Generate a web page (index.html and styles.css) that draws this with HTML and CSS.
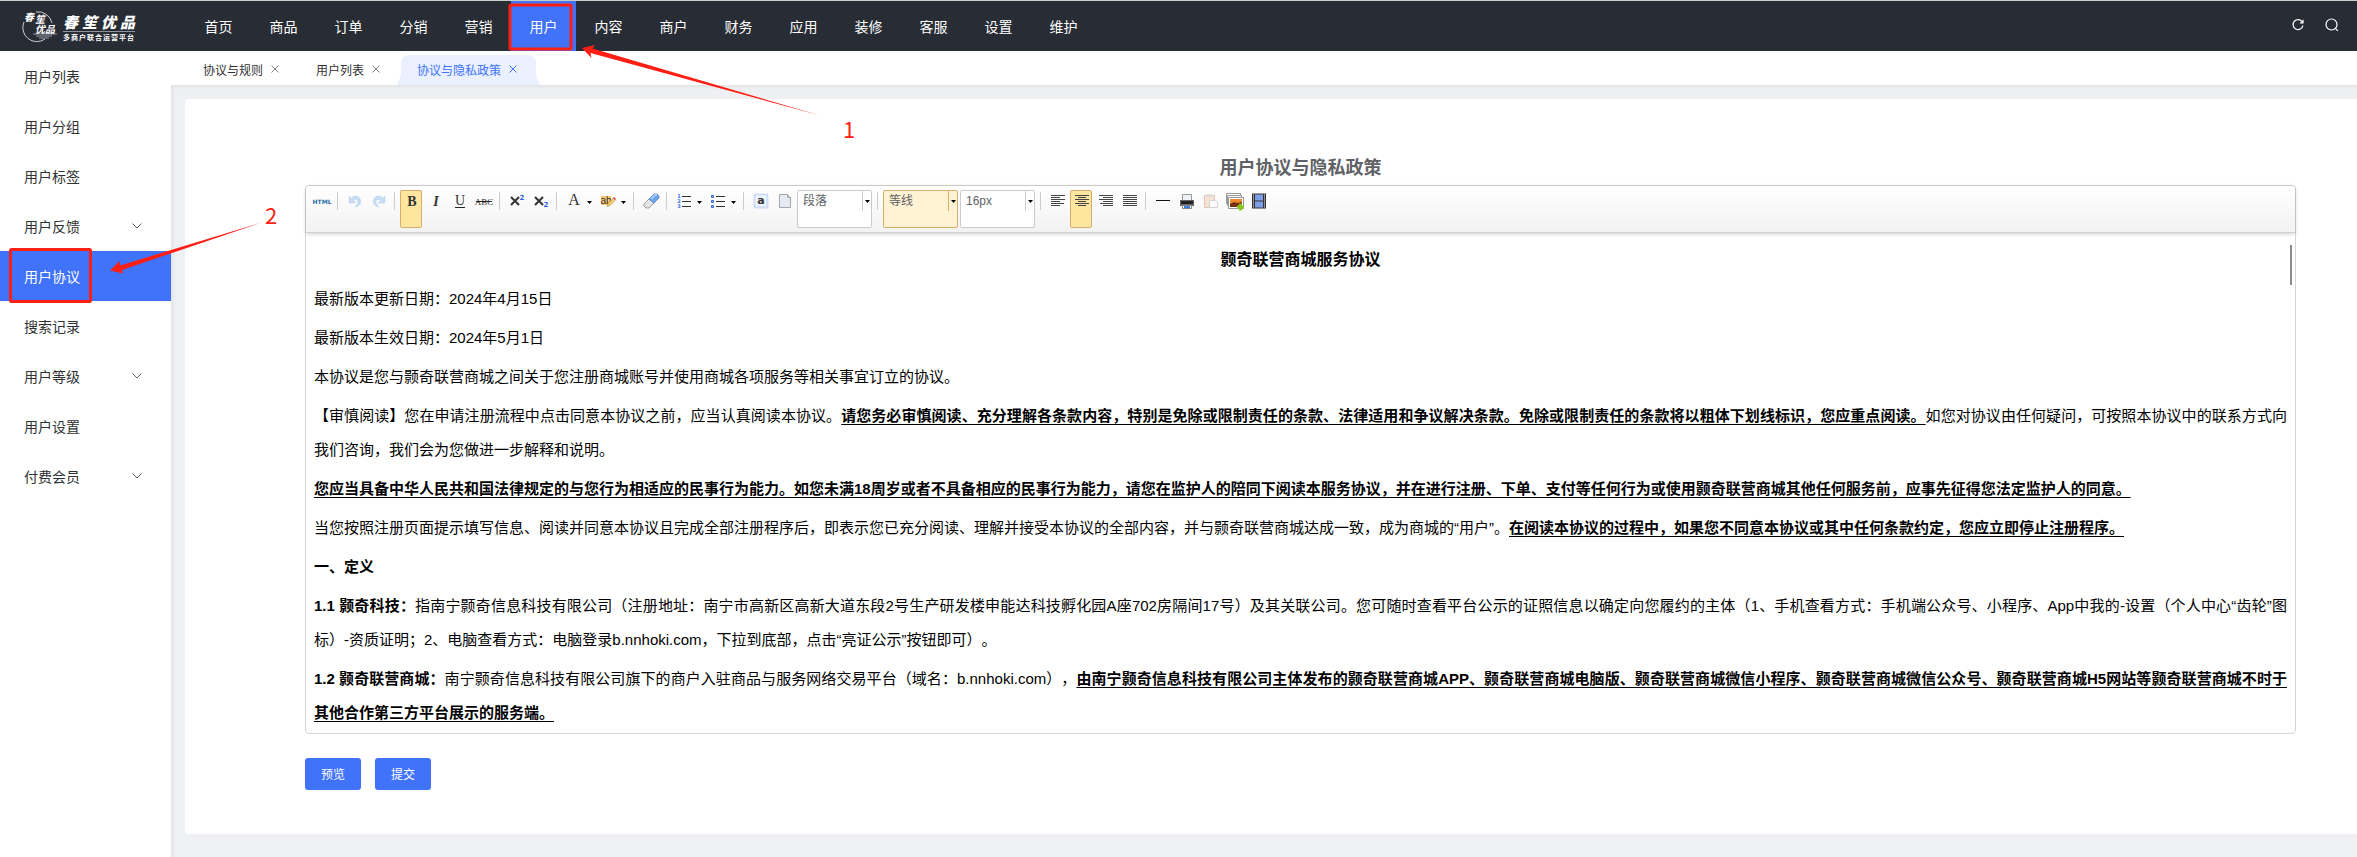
FILE: index.html
```html
<!DOCTYPE html>
<html lang="zh-CN">
<head>
    <meta charset="UTF-8">
    <meta name="viewport" content="width=device-width, initial-scale=1.0">
    <title>协议与隐私政策</title>
    <link rel="stylesheet" href="styles.css">
</head>
<body>

    <header class="header">
        <a href="#" class="logo" aria-label="春笙优品">
            <svg width="128" height="34" viewBox="0 0 128 34">
                <g fill="none" stroke="#c9ccd2">
                    <path d="M14 3a14 14 0 0 1 16 11M2 13a14 14 0 0 0 21 17" />
                    <path d="M11 25h24M14 27h16M17 29h10" stroke-width="1" opacity=".7" />
                </g>
                <g class="logo-script">
                    <text x="2 13" y="12 14">春笙</text>
                    <text x="13 23" y="24">优品</text>
                </g>
                <text class="logo-name" x="41 60 79 98" y="19">春笙优品</text>
                <path d="M41 22.500h72" stroke="#8f949c" />
                <text class="logo-sub" x="41 49 57 65 73 81 89 97 105" y="31">多商户联合运营平台</text>
            </svg>
        </a>
        <nav class="nav">
            <a href="#">首页</a>
            <a href="#">商品</a>
            <a href="#">订单</a>
            <a href="#">分销</a>
            <a href="#">营销</a>
            <a href="#" class="active">用户</a>
            <a href="#">内容</a>
            <a href="#">商户</a>
            <a href="#">财务</a>
            <a href="#">应用</a>
            <a href="#">装修</a>
            <a href="#">客服</a>
            <a href="#">设置</a>
            <a href="#">维护</a>
        </nav>
        <div class="header-tools">
            <button type="button" aria-label="刷新">
                <svg width="14" height="14" viewBox="0 0 14 14" fill="none" stroke="#fff" stroke-width="1.200"><path d="M11.500 4.200A5 5 0 1 0 12 7.500M12 1.800v3H9" /></svg>
            </button>
            <button type="button" aria-label="搜索">
                <svg width="14" height="14" viewBox="0 0 14 14" fill="none" stroke="#fff" stroke-width="1.200"><circle cx="6.500" cy="6.500" r="5.500" /><path d="M10.400 10.400l2.400 2.400" /></svg>
            </button>
        </div>
    </header>

    <div class="layout">
        <aside class="sidebar">
            <a href="#">用户列表</a>
            <a href="#">用户分组</a>
            <a href="#">用户标签</a>
            <a href="#">用户反馈 <svg class="chevron" width="10" height="6" viewBox="0 0 10 6"><path d="M.500.500L5 5 9.500.500" /></svg></a>
            <a href="#" class="active">用户协议</a>
            <a href="#">搜索记录</a>
            <a href="#">用户等级 <svg class="chevron" width="10" height="6" viewBox="0 0 10 6"><path d="M.500.500L5 5 9.500.500" /></svg></a>
            <a href="#">用户设置</a>
            <a href="#">付费会员 <svg class="chevron" width="10" height="6" viewBox="0 0 10 6"><path d="M.500.500L5 5 9.500.500" /></svg></a>
        </aside>

        <main class="main">
            <div class="tabs">
                <div class="tab">
                    <a href="#">协议与规则</a>
                    <button type="button" aria-label="关闭"><svg width="8" height="8" viewBox="0 0 8 8"><path d="M.500.500l7 7M7.500.500l-7 7" /></svg></button>
                </div>
                <div class="tab">
                    <a href="#">用户列表</a>
                    <button type="button" aria-label="关闭"><svg width="8" height="8" viewBox="0 0 8 8"><path d="M.500.500l7 7M7.500.500l-7 7" /></svg></button>
                </div>
                <div class="tab active">
                    <a href="#">协议与隐私政策</a>
                    <button type="button" aria-label="关闭"><svg width="8" height="8" viewBox="0 0 8 8"><path d="M.500.500l7 7M7.500.500l-7 7" /></svg></button>
                </div>
            </div>

            <div class="content">
                <section class="card">
                    <h1>用户协议与隐私政策</h1>

                    <div class="editor">
                        <div class="toolbar">
                            <button type="button" aria-label="源代码"><svg width="18" height="16" viewBox="0 0 18 16"><text x="9" y="11" class="ic-html">HTML</text></svg></button>
                            <span class="sep"></span>
                            <button type="button" aria-label="撤销"><svg width="16" height="16" viewBox="0 0 16 16"><path d="M2 3v7h7L6.500 7.500C9 5 12 7 10.500 11L8 14c6-1 7-6 4.500-9S6 3 4.300 5.200z" fill="#c5dcf2" stroke="#b4d0ec" stroke-width=".500" /></svg></button>
                            <button type="button" aria-label="重做"><svg width="16" height="16" viewBox="0 0 16 16"><path d="M14 3v7H7l2.500-2.500C7 5 4 7 5.500 11L8 14C2 13 1 8 3.500 5s6.500-2 8.200.200z" fill="#c5dcf2" stroke="#b4d0ec" stroke-width=".500" /></svg></button>
                            <span class="sep"></span>
                            <button type="button" class="on" aria-label="加粗"><svg width="16" height="16" viewBox="0 0 16 16"><text x="8" y="13" class="ic-serif bold">B</text></svg></button>
                            <button type="button" aria-label="斜体"><svg width="16" height="16" viewBox="0 0 16 16"><text x="8" y="13" class="ic-serif italic">I</text></svg></button>
                            <button type="button" aria-label="下划线"><svg width="16" height="16" viewBox="0 0 16 16"><text x="8" y="12" class="ic-serif">U</text><path d="M3 14.500h10" stroke="#222" /></svg></button>
                            <button type="button" aria-label="删除线"><svg width="18" height="16" viewBox="0 0 18 16"><text x="9" y="12" class="ic-abc">ABC</text><path d="M1 8.500h16" stroke="#222" /></svg></button>
                            <span class="sep"></span>
                            <button type="button" aria-label="上标"><svg width="16" height="16" viewBox="0 0 16 16"><path d="M2 4l8 8M10 4l-8 8" stroke="#333" stroke-width="2" /><text x="13" y="7" class="ic-num">2</text></svg></button>
                            <button type="button" aria-label="下标"><svg width="16" height="16" viewBox="0 0 16 16"><path d="M2 4l8 8M10 4l-8 8" stroke="#333" stroke-width="2" /><text x="13" y="14" class="ic-num">2</text></svg></button>
                            <span class="sep"></span>
                            <button type="button" class="split" aria-label="字体颜色"><svg width="16" height="16" viewBox="0 0 16 16"><text x="8" y="12" class="ic-serif big">A</text></svg><i class="caret"></i></button>
                            <button type="button" class="split" aria-label="背景色"><svg width="16" height="16" viewBox="0 0 16 16"><path d="M1 3h10v9H1z" fill="#fdc670" /><text x="6" y="11" class="ic-ab">ab</text><path d="M7 13.500l1-3 5-5 2 2-5 5z" fill="#f0d070" stroke="#9a7430" stroke-width=".500" /><path d="M13 5l1-1 2 2-1 1z" fill="#d33" /></svg><i class="caret"></i></button>
                            <span class="sep"></span>
                            <button type="button" aria-label="清除格式"><svg width="16" height="16" viewBox="0 0 16 16"><path d="M1 11l5-5 5 4-5 5H3L1 13z" fill="#e6e6ea" stroke="#777" stroke-width=".700" /><path d="M6 6l5-5h3l2 2v2l-5 5z" fill="#6aa5ee" stroke="#4a7cc0" stroke-width=".700" /><path d="M8 6l4-4h2" fill="none" stroke="#b8d7fb" stroke-width="1.500" /></svg></button>
                            <span class="sep"></span>
                            <button type="button" class="split" aria-label="有序列表"><svg width="16" height="16" viewBox="0 0 16 16"><g class="ic-ol"><text x="3" y="5">1</text><text x="3" y="10">2</text><text x="3" y="15">3</text></g><path d="M6 3.500h9M6 8.500h9M6 13.500h9" stroke="#333" /></svg><i class="caret"></i></button>
                            <button type="button" class="split" aria-label="无序列表"><svg width="16" height="16" viewBox="0 0 16 16"><path d="M1.500 2.500h2v2h-2zM1.500 7.500h2v2h-2zM1.500 12.500h2v2h-2z" fill="#9db8f5" stroke="#3c66d8" /><path d="M6 3.500h9M6 8.500h9M6 13.500h9" stroke="#333" /></svg><i class="caret"></i></button>
                            <span class="sep"></span>
                            <button type="button" aria-label="全选"><svg width="16" height="16" viewBox="0 0 16 16"><rect x="1.500" y="1.500" width="13" height="13" fill="#eef4fd" stroke="#a9c6f4" stroke-width="2" stroke-dasharray="1 1" /><text x="8" y="11" class="ic-a">a</text></svg></button>
                            <button type="button" aria-label="清空文档"><svg width="16" height="16" viewBox="0 0 16 16"><path d="M2.500 1.500h8l3 3v10h-11z" fill="#e6ebf3" stroke="#a5a7aa" /><path d="M10.500 1.500v3h3" fill="#ccc" stroke="#a5a7aa" /></svg></button>
                            <div class="combo">
                                <select aria-label="段落格式"><option>段落</option></select>
                                <i class="caret"></i>
                            </div>
                            <span class="sep"></span>
                            <div class="combo on">
                                <select aria-label="字体"><option>等线</option></select>
                                <i class="caret"></i>
                            </div>
                            <div class="combo">
                                <select aria-label="字号"><option>16px</option></select>
                                <i class="caret"></i>
                            </div>
                            <span class="sep"></span>
                            <button type="button" aria-label="居左对齐"><svg width="16" height="16" viewBox="0 0 16 16" class="ic-lines"><path d="M1 2.500h14M1 4.500h9M1 6.500h14M1 8.500h9M1 10.500h13M1 12.500h9" /></svg></button>
                            <button type="button" class="on" aria-label="居中对齐"><svg width="16" height="16" viewBox="0 0 16 16" class="ic-lines"><path d="M1 2.500h14M4 4.500h8M1 6.500h14M4 8.500h8M1 10.500h14M4 12.500h8" /></svg></button>
                            <button type="button" aria-label="居右对齐"><svg width="16" height="16" viewBox="0 0 16 16" class="ic-lines"><path d="M1 2.500h14M5 4.500h10M1 6.500h14M5 8.500h10M2 10.500h13M5 12.500h10" /></svg></button>
                            <button type="button" aria-label="两端对齐"><svg width="16" height="16" viewBox="0 0 16 16" class="ic-lines"><path d="M1 2.500h14M1 4.500h14M1 6.500h14M1 8.500h14M1 10.500h14M1 12.500h14" /></svg></button>
                            <span class="sep"></span>
                            <button type="button" aria-label="分隔线"><svg width="16" height="16" viewBox="0 0 16 16"><path d="M1 7.500h14" stroke="#111" /></svg></button>
                            <button type="button" aria-label="打印"><svg width="16" height="16" viewBox="0 0 16 16"><path d="M3.500 1.500h9v6h-9z" fill="#eef1f5" stroke="#999" /><path d="M1 7h14v6H1z" fill="#666" /><path d="M2 8h12v3H2z" fill="#222" /><path d="M3.500 12.500h9v3h-9z" fill="#fff" stroke="#888" /><path d="M5 14h6" stroke="#3d7fe0" stroke-width="2" /></svg></button>
                            <button type="button" aria-label="粘贴"><svg width="16" height="16" viewBox="0 0 16 16"><path d="M1.500 2.500h10v12h-10z" fill="#f6e2d4" stroke="#e6c3ac" /><path d="M4 1h5v3H4z" fill="#ddd" /><path d="M6.500 7.500h6l2 2v5h-8z" fill="#fafafa" stroke="#d4d4d4" /></svg></button>
                            <button type="button" aria-label="多图上传"><svg width="20" height="18" viewBox="0 0 20 18"><path d="M1.500.500h14v10h-14z" fill="#fff" stroke="#999" /><path d="M2.500 2.500h14v10h-14z" fill="#fff" stroke="#999" /><path d="M3.500 4.500h15v11h-15z" fill="#fff" stroke="#999" /><path d="M5 6h12v8H5z" fill="#ef8a2c" /><path d="M5 11l4-2 3 1 5-1v5H5z" fill="#76300f" /><path d="M15.500 10.500v7M12 14h7" stroke="#8ac61e" stroke-width="3" /></svg></button>
                            <button type="button" aria-label="视频"><svg width="16" height="16" viewBox="0 0 16 16"><path d="M1 .500h14v15H1z" fill="#333" /><path d="M4 1.500h8v6H4zM4 8.500h8v6H4z" fill="#7f9eea" /><path d="M2.500 1.500v14M13.500 1.500v14" stroke="#eee" stroke-dasharray="1 1" /></svg></button>
                        </div>

                        <div class="document" contenteditable="true" spellcheck="false" role="textbox" aria-label="协议内容">
                            <h2>颢奇联营商城服务协议</h2>
                            <p>最新版本更新日期：2024年4月15日</p>
                            <p>最新版本生效日期：2024年5月1日</p>
                            <p>本协议是您与颢奇联营商城之间关于您注册商城账号并使用商城各项服务等相关事宜订立的协议。</p>
                            <p>【审慎阅读】您在申请注册流程中点击同意本协议之前，应当认真阅读本协议。<u>请您务必审慎阅读、充分理解各条款内容，特别是免除或限制责任的条款、法律适用和争议解决条款。免除或限制责任的条款将以粗体下划线标识，您应重点阅读。</u>如您对协议由任何疑问，可按照本协议中的联系方式向我们咨询，我们会为您做进一步解释和说明。</p>
                            <p><u>您应当具备中华人民共和国法律规定的与您行为相适应的民事行为能力。如您未满18周岁或者不具备相应的民事行为能力，请您在监护人的陪同下阅读本服务协议，并在进行注册、下单、支付等任何行为或使用颢奇联营商城其他任何服务前，应事先征得您法定监护人的同意。</u></p>
                            <p>当您按照注册页面提示填写信息、阅读并同意本协议且完成全部注册程序后，即表示您已充分阅读、理解并接受本协议的全部内容，并与颢奇联营商城达成一致，成为商城的“用户”。<u>在阅读本协议的过程中，如果您不同意本协议或其中任何条款约定，您应立即停止注册程序。</u></p>
                            <p><strong>一、定义</strong></p>
                            <p><strong>1.1 颢奇科技：</strong>指南宁颢奇信息科技有限公司（注册地址：南宁市高新区高新大道东段2号生产研发楼申能达科技孵化园A座702房隔间17号）及其关联公司。您可随时查看平台公示的证照信息以确定向您履约的主体（1、手机查看方式：手机端公众号、小程序、App中我的-设置（个人中心“齿轮”图标）-资质证明；2、电脑查看方式：电脑登录b.nnhoki.com，下拉到底部，点击“亮证公示”按钮即可）。</p>
                            <p><strong>1.2 颢奇联营商城：</strong>南宁颢奇信息科技有限公司旗下的商户入驻商品与服务网络交易平台（域名：b.nnhoki.com），<u>由南宁颢奇信息科技有限公司主体发布的颢奇联营商城APP、颢奇联营商城电脑版、颢奇联营商城微信小程序、颢奇联营商城微信公众号、颢奇联营商城H5网站等颢奇联营商城不时于其他合作第三方平台展示的服务端。</u></p>
                        </div>
                        <span class="scroll-thumb"></span>
                    </div>

                    <div class="actions">
                        <button type="button">预览</button>
                        <button type="button">提交</button>
                    </div>
                </section>
            </div>
        </main>
    </div>

    <!-- 操作步骤标注 -->
    <svg class="steps" width="900" height="320" viewBox="0 0 900 320">
        <g fill="none" stroke="#fd1f14" stroke-width="3">
            <rect x="510" y="5" width="61" height="44" rx="1" />
            <rect x="10.500" y="249.500" width="80" height="52" rx="1" />
        </g>
        <g fill="#fd1f14">
            <path d="M582 48l13-3-2.500 3.500L820 115.500 590.500 53l1 5z" />
            <path d="M110 270.500l9.500-9.500.500 4.500L263 222 122 270l1 3.500z" />
            <text x="843" y="138">1</text>
            <text x="265" y="224">2</text>
        </g>
    </svg>

</body>
</html>
```
FILE: styles.css
```css
* {
    box-sizing: border-box;
}
body {
    margin: 0;
    min-height: 100vh;
    display: flex;
    flex-direction: column;
    position: relative;
    font-family: "Noto Sans CJK SC", sans-serif;
    font-size: 14px;
    color: #303133;
    background: #fff;
}
a {
    color: inherit;
    text-decoration: none;
}
button {
    font-family: inherit;
    border: none;
    background: none;
    padding: 0;
    cursor: pointer;
}
svg {
    display: block;
    flex: none;
    overflow: visible;
}

/* 顶部导航 */
.header {
    display: flex;
    align-items: center;
    height: 51px;
    background: #282c34;
    border-top: 1px solid #c8cdc8;
    color: #fff;
}
.logo {
    width: 186px;
    padding-left: 22px;
}
.logo text {
    fill: #fff;
}
.logo-script {
    font-size: 10px;
    font-weight: bold;
    font-style: italic;
}
.logo-name {
    font-size: 15px;
    font-weight: 900;
    font-style: italic;
}
.logo-sub {
    font-size: 7px;
    font-weight: bold;
}
.nav {
    display: flex;
    align-self: stretch;
}
.nav a {
    display: flex;
    align-items: center;
    justify-content: center;
    width: 65px;
    padding-bottom: 1px;
}
.nav .active {
    background: #4073fa;
}
.header-tools {
    display: flex;
    gap: 20px;
    margin-left: auto;
    padding: 0 18px 2px 0;
}

.layout {
    display: flex;
    flex: 1;
}

/* 左侧菜单 */
.sidebar {
    width: 171px;
    flex: none;
}
.sidebar a {
    display: flex;
    align-items: center;
    justify-content: space-between;
    height: 50px;
    padding: 0 29px 1px 24px;
}
.sidebar .active {
    background: #4073fa;
    color: #fff;
}
.chevron {
    fill: none;
    stroke: #606266;
}

.main {
    flex: 1;
    min-width: 0;
    display: flex;
    flex-direction: column;
}

/* 标签页 */
.tabs {
    display: flex;
    gap: 2px;
    height: 34px;
    padding: 4px 16px 0;
    font-size: 12px;
}
.tab {
    position: relative;
    display: flex;
    align-items: center;
    gap: 8px;
    padding: 0 19px 2px 16px;
    border-radius: 8px 8px 0 0;
}
.tab path {
    stroke: #7c7f86;
    fill: none;
}
.tab.active {
    background: #eaf0ff;
    color: #4073fa;
}
.tab.active path {
    stroke: #4073fa;
}
.tab.active::before,
.tab.active::after {
    content: "";
    position: absolute;
    bottom: 0;
    width: 4px;
    height: 10px;
    background: #eaf0ff;
}
.tab.active::before {
    left: -4px;
    clip-path: polygon(100% 0, 100% 100%, 0 100%);
}
.tab.active::after {
    right: -4px;
    clip-path: polygon(0 0, 100% 100%, 0 100%);
}

.content {
    flex: 1;
    padding: 14px 0 23px 14px;
    background: #eff0f4;
    box-shadow: inset 3px 3px 4px -2px rgba(0, 0, 0, 0.08);
}
.card {
    padding: 55px 61px 44px 120px;
    background: #fff;
    border-radius: 3px 0 0 3px;
}
.card h1 {
    margin: 0 0 7px;
    font-size: 18px;
    line-height: 24px;
    text-align: center;
    color: #606266;
}

/* 富文本编辑器 */
.editor {
    position: relative;
    border: 1px solid #d4d4d4;
    border-radius: 4px;
}
.toolbar {
    display: flex;
    flex-wrap: wrap;
    gap: 2px;
    padding: 4px;
    border-bottom: 1px solid #d0d0d0;
    border-radius: 4px 4px 0 0;
    background: linear-gradient(#fff, #f2f2f2);
    box-shadow: 0 1px 4px rgba(0, 0, 0, 0.2);
}
.toolbar button {
    display: flex;
    justify-content: center;
    width: 22px;
    height: 38px;
    padding: 2px 0 0 2px;
    border: 1px solid transparent;
    border-radius: 2px;
}
.toolbar .split {
    width: 32px;
    gap: 5px;
}
.toolbar .on {
    background: #ffe69f;
    border-color: #dcac6c;
}
.sep {
    width: 1px;
    height: 18px;
    margin: 2px 3px 0;
    background: #ccc;
}
.caret {
    flex: none;
    width: 5px;
    height: 3px;
    margin-top: 8px;
    background: #000;
    clip-path: polygon(0 0, 100% 0, 50% 100%);
}
.combo {
    display: flex;
    width: 75px;
    height: 38px;
    border: 1px solid #ccc;
    border-radius: 2px;
    background: #fff;
}
.toolbar .combo.on {
    background: #fff3d4;
}
.combo select {
    appearance: none;
    width: 65px;
    height: 20px;
    padding: 0 0 0 5px;
    border: none;
    border-right: 1px solid #ccc;
    background: none;
    font-family: "Liberation Sans", "Noto Sans CJK SC", sans-serif;
    font-size: 12px;
    color: #606266;
}
.combo.on select {
    border-color: #dcac6c;
}
.combo .caret {
    margin: 9px 0 0 2px;
}

/* 工具栏图标文字 */
.toolbar text {
    text-anchor: middle;
    fill: #333;
}
.toolbar .ic-html {
    font: bold 6px "DejaVu Sans", sans-serif;
    fill: #2c6ea6;
}
.ic-serif {
    font: 14px "Liberation Serif", serif;
}
.ic-serif.bold {
    font-weight: bold;
}
.ic-serif.italic {
    font-weight: bold;
    font-style: italic;
}
.ic-serif.big {
    font-size: 16px;
}
.ic-abc {
    font: 9px "Liberation Serif", serif;
}
.toolbar .ic-num {
    font: bold 7px "DejaVu Sans", sans-serif;
    fill: #2f62e0;
}
.ic-ab {
    font: 10px "Liberation Sans", sans-serif;
}
.ic-a {
    font: bold 11px "DejaVu Sans", sans-serif;
}
.toolbar .ic-ol text {
    font: bold 5px "DejaVu Sans", sans-serif;
    fill: #3c76e8;
}
.ic-lines {
    stroke: #444;
}

.document {
    padding: 5px 8px 3px;
    font-family: "Liberation Sans", "Noto Sans CJK SC", sans-serif;
    font-size: 15px;
    line-height: 34px;
    color: #000;
    text-align: justify;
    text-spacing-trim: space-all;
    outline: none;
}
.document h2 {
    margin: 5px 0;
    font-size: 16px;
    text-align: center;
}
.document p {
    margin: 5px 0 0;
}
.document u {
    font-weight: bold;
    text-decoration-thickness: 1px;
    text-underline-offset: 3px;
    text-decoration-skip-ink: none;
}
.scroll-thumb {
    position: absolute;
    top: 59px;
    right: 3px;
    width: 2px;
    height: 40px;
    background: #8a8a8a;
}

.actions {
    display: flex;
    gap: 14px;
    margin-top: 24px;
}
.actions button {
    height: 32px;
    padding: 0 16px 2px;
    border-radius: 3px;
    background: #4073fa;
    color: #fff;
    font-size: 12px;
}

.steps {
    position: absolute;
    top: 0;
    left: 0;
    pointer-events: none;
}
.steps text {
    font-size: 22px;
}
```
